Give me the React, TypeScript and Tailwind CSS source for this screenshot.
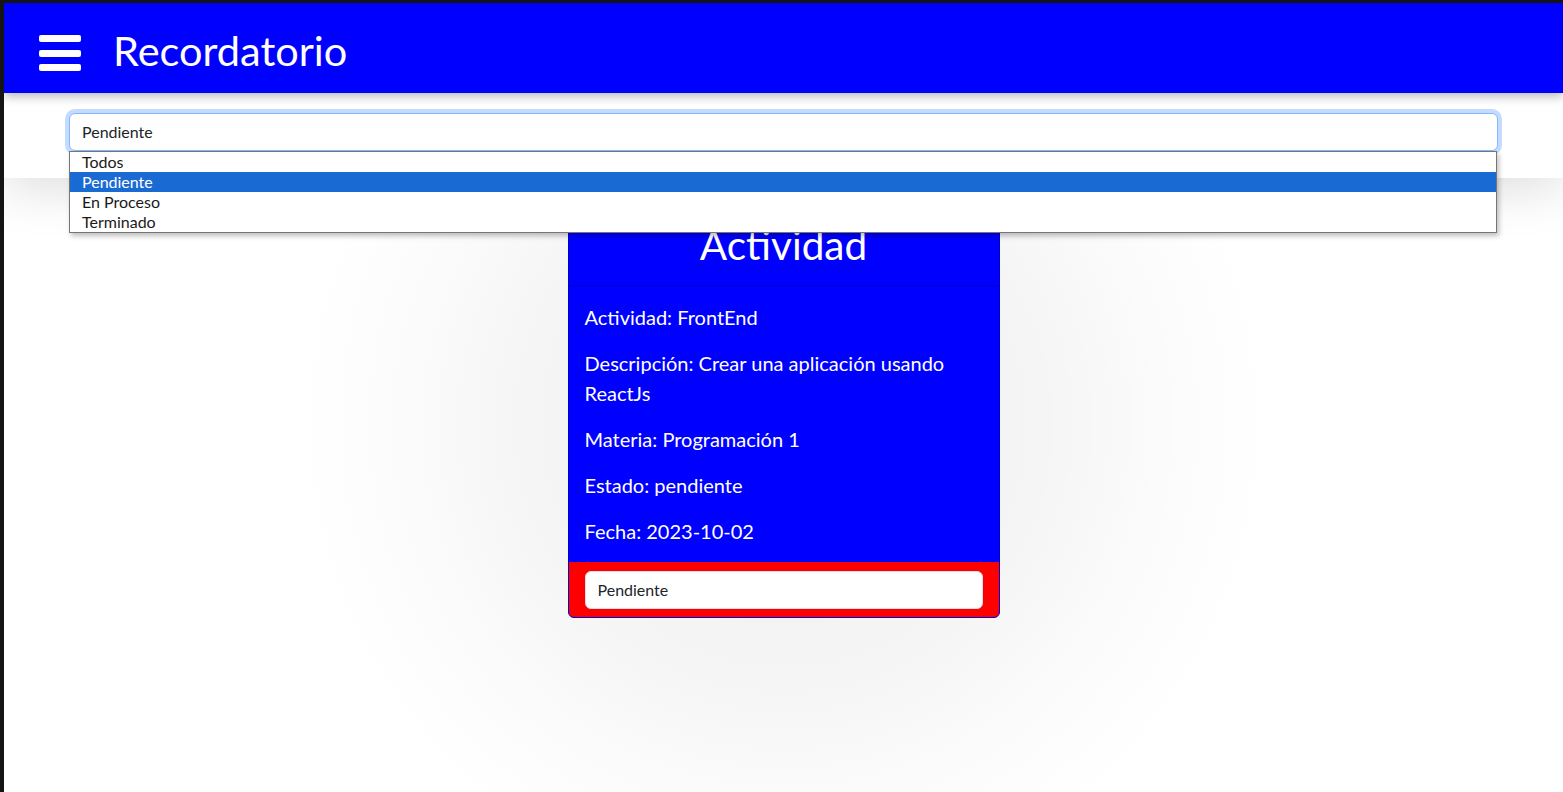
import React from "react";

const font = { fontFamily: "Lato, 'Noto Sans', sans-serif" };

export default function App() {
  const options = ["Todos", "Pendiente", "En Proceso", "Terminado"];
  return (
    <div
      className="flex h-[792px] w-full flex-col overflow-hidden bg-white border-t-[3px] border-l-[4px] border-[#141414]"
      style={font}
    >
      <header className="relative z-30 flex h-[90px] shrink-0 items-center bg-[#0000ff] pl-[35px] shadow-[0_3px_10px_rgba(0,0,0,0.3)]">
        <div className="mt-[10px] flex flex-col gap-[7.5px]">
          <span className="block h-[7px] w-[42px] rounded-[2px] bg-white" />
          <span className="block h-[7px] w-[42px] rounded-[2px] bg-white" />
          <span className="block h-[7px] w-[42px] rounded-[2px] bg-white" />
        </div>
        <h1 className="ml-[32px] mt-[3px] text-[41.5px] leading-[48px] text-white">Recordatorio</h1>
      </header>

      <section className="relative z-20 h-[85px] shrink-0 bg-white px-[65px] pt-[20px] shadow-[0_12px_50px_rgba(0,0,0,0.13)]">
        <div className="relative">
          <div className="flex h-[38px] items-center rounded-[6px] border border-[#86b7fe] bg-white pl-[12px] text-[16px] text-[#212529] shadow-[0_0_0_4px_rgba(13,110,253,0.25)]">
            Pendiente
          </div>
          <div className="absolute left-0 right-[1px] top-full border border-[#767676] bg-white shadow-[2px_3px_5px_rgba(0,0,0,0.25)]">
            {options.map((o) => (
              <div
                key={o}
                className={
                  o === "Pendiente"
                    ? "h-[20px] bg-[#1a6ad4] pl-[12px] text-[16px] leading-[20px] text-white"
                    : "h-[20px] pl-[12px] text-[16px] leading-[20px] text-[#1a1a1a]"
                }
              >
                {o}
              </div>
            ))}
          </div>
        </div>
      </section>

      <main className="relative z-10 flex flex-1 justify-center bg-[radial-gradient(circle_at_50%_40%,rgba(0,0,0,0.065)_0px,rgba(0,0,0,0.04)_260px,rgba(0,0,0,0.012)_400px,transparent_490px)] pt-[34px]">
        <div className="h-fit w-[432px] overflow-hidden rounded-[6px] border border-[#0000c8] bg-[#0000ff] text-white">
          <div className="border-b border-[#0000cc] px-[16px] py-[8px] text-center">
            <h2 className="mb-[8px] text-[40.5px] leading-[48px]">Actividad</h2>
          </div>
          <div className="px-[16px] pt-[16px] text-[20px] leading-[30px]">
            <p className="mb-[16px]">Actividad: FrontEnd</p>
            <p className="mb-[16px]">Descripción: Crear una aplicación usando ReactJs</p>
            <p className="mb-[16px]">Materia: Programación 1</p>
            <p className="mb-[16px]">Estado: pendiente</p>
            <p className="mb-[16px]">Fecha: 2023-10-02</p>
          </div>
          <div className="bg-[#ff0000] px-[16px] pb-[8px] pt-[9px]">
            <div className="flex h-[38px] items-center rounded-[6px] border border-[#dee2e6] bg-white pl-[12px] text-[16px] text-[#212529]">
              Pendiente
            </div>
          </div>
        </div>
      </main>
    </div>
  );
}
